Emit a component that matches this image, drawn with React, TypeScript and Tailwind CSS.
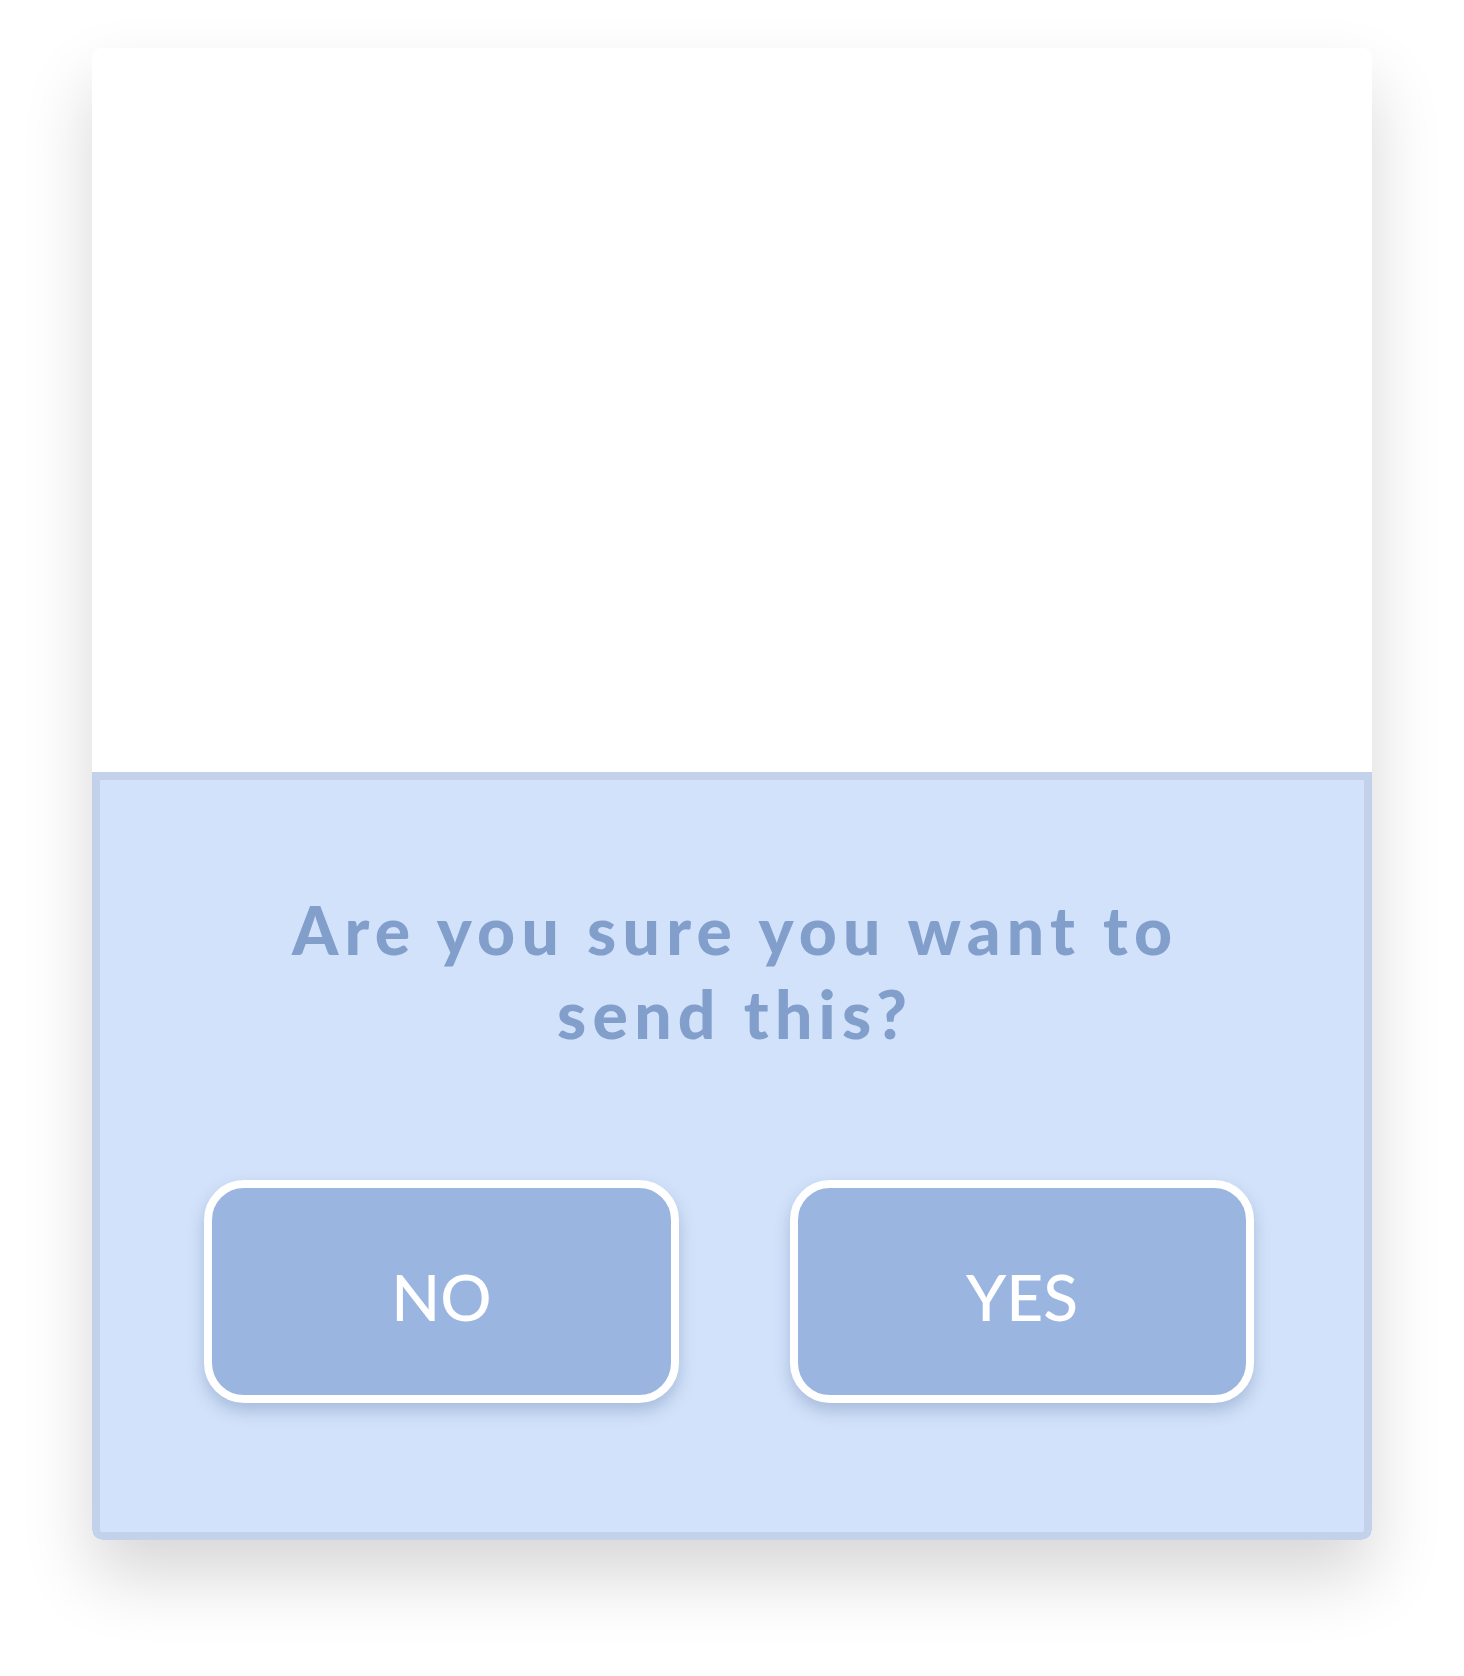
export default function App() {
  return (
    <div className="min-h-[1676px] bg-white pt-[48px] pl-[92px]" style={{ fontFamily: 'Lato, "Noto Sans", sans-serif' }}>
      <div className="w-[1280px] h-[1492px] rounded-[10px] bg-white shadow-[0_36px_70px_rgba(0,0,0,0.16)] flex flex-col overflow-hidden">
        {/* top blank area */}
        <div className="h-[724px] bg-white" />

        {/* confirm panel */}
        <div className="flex-1 border-[8px] border-[#c3d2ea] bg-[#d2e2fa] rounded-b-[10px] flex flex-col items-center pt-[108px]">
          <h1 className="text-[66px] leading-[84px] font-black tracking-[0.095em] text-[#829fcc] text-center w-[930px] pl-[0.095em]">
            Are you sure you want to send this?
          </h1>

          <div className="flex w-full pl-[104px] gap-[111px] mt-[124px]">
            <button className="w-[475px] h-[223px] rounded-[40px] border-[8px] border-white bg-[#9bb5e1] text-white text-[64px] font-medium shadow-[0_8px_16px_rgba(70,100,150,0.3)] flex items-center justify-center pt-[10px]">
              NO
            </button>
            <button className="w-[464px] h-[223px] rounded-[40px] border-[8px] border-white bg-[#9bb5e1] text-white text-[64px] font-medium shadow-[0_8px_16px_rgba(70,100,150,0.3)] flex items-center justify-center pt-[10px]">
              YES
            </button>
          </div>
        </div>
      </div>
    </div>
  )
}
